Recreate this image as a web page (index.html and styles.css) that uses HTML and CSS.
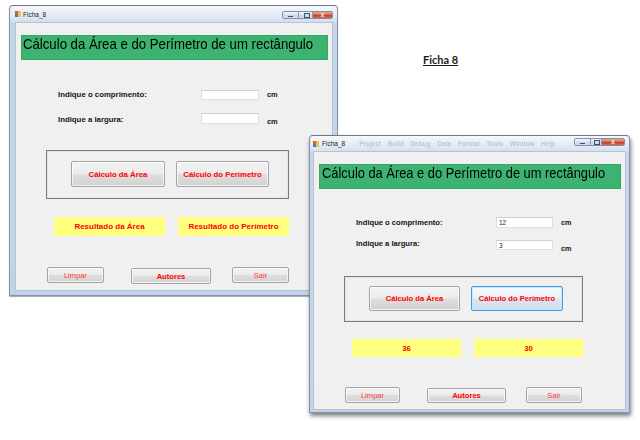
FILE: index.html
```html
<!DOCTYPE html>
<html lang="pt">
<head>
<meta charset="utf-8">
<title>Ficha 8</title>
<link rel="stylesheet" href="styles.css">
</head>
<body>
<div class="desk">
  <div class="win win1">
    <div class="titlebar">
      <svg class="appicon" viewBox="0 0 6 6" width="6" height="6"><rect x="0" y="0" width="3" height="3" fill="#e8582a"/><rect x="3" y="0" width="3" height="3" fill="#f5c242"/><rect x="0" y="3" width="3" height="3" fill="#3d7fd0"/><rect x="3" y="3" width="3" height="3" fill="#f5c242"/></svg>
      <span class="wtitle">Ficha_8</span>
      <div class="caps"><span class="cap min"></span><span class="cap max"></span><span class="cap close"></span></div>
    </div>
    <div class="client">
      <div class="header"><span>Cálculo da Área e do Perímetro de um rectângulo</span></div>
      <div class="row r1"><span class="lbl">Indique o comprimento:</span><span class="tb"></span><span class="unit">cm</span></div>
      <div class="row r2"><span class="lbl">Indique a largura:</span><span class="tb"></span><span class="unit">cm</span></div>
      <div class="group"><div class="btn calc a">Cálculo da Área</div><div class="btn calc b">Cálculo do Perímetro</div></div>
      <div class="results"><div class="res">Resultado da Área</div><div class="res">Resultado do Perímetro</div></div>
      <div class="actions"><div class="btn act limpar">Limpar</div><div class="btn act autores">Autores</div><div class="btn act sair">Sair</div></div>
    </div>
  </div>

  <div class="ficha">Ficha 8</div>

  <div class="win win2">
    <div class="titlebar">
      <svg class="appicon" viewBox="0 0 6 6" width="6" height="6"><rect x="0" y="0" width="3" height="3" fill="#e8582a"/><rect x="3" y="0" width="3" height="3" fill="#f5c242"/><rect x="0" y="3" width="3" height="3" fill="#3d7fd0"/><rect x="3" y="3" width="3" height="3" fill="#f5c242"/></svg>
      <span class="wtitle">Ficha_8</span>
      <div class="ghost"><span>Project</span><span>Build</span><span>Debug</span><span>Data</span><span>Format</span><span>Tools</span><span>Window</span><span>Help</span></div>
      <div class="caps"><span class="cap min"></span><span class="cap max"></span><span class="cap close"></span></div>
    </div>
    <div class="client">
      <div class="header"><span>Cálculo da Área e do Perímetro de um rectângulo</span></div>
      <div class="row r1"><span class="lbl">Indique o comprimento:</span><span class="tb">12</span><span class="unit">cm</span></div>
      <div class="row r2"><span class="lbl">Indique a largura:</span><span class="tb">3</span><span class="unit">cm</span></div>
      <div class="group"><div class="btn calc a">Cálculo da Área</div><div class="btn calc b focus">Cálculo do Perímetro</div></div>
      <div class="results"><div class="res">36</div><div class="res">30</div></div>
      <div class="actions"><div class="btn act limpar">Limpar</div><div class="btn act autores">Autores</div><div class="btn act sair">Sair</div></div>
    </div>
  </div>
</div>
</body>
</html>
```

FILE: styles.css
```css
html, body {
  margin: 0;
  padding: 0;
  background: #ffffff;
}
.desk {
  position: relative;
  width: 640px;
  height: 440px;
  overflow: hidden;
  font-family: "Liberation Sans", Arial, sans-serif;
}

/* ---------- window frame ---------- */
.win {
  position: absolute;
  box-sizing: border-box;
  border: 1px solid #8393a8;
  border-top-color: #6d7a8c;
  border-radius: 4px 4px 1px 1px;
  background: linear-gradient(to bottom, #f6f8fb 0, #e4ebf4 9px, #d3dfee 16px, #c6d6ea 17px, #c2d3e9 100%);
  display: flex;
  flex-direction: column;
}
.win1 {
  left: 9px;
  top: 5px;
  width: 329px;
  height: 291px;
  box-shadow: 0 1px 1px rgba(0,0,0,.35);
}
.win2 {
  left: 309px;
  top: 135px;
  width: 321px;
  height: 278px;
  box-shadow: 1px 3px 4px rgba(0,0,0,.5);
}

.titlebar {
  display: flex;
  align-items: center;
  flex: none;
}
.win1 .titlebar { height: 16px; padding: 0 4px 0 5px; }
.win2 .titlebar { height: 15px; padding: 0 4px 0 3px; }

.appicon { flex: none; display: block; }
.wtitle {
  margin-left: 2px;
  font-size: 6.5px;
  color: #222;
  white-space: nowrap;
}
.win2 .wtitle { margin-left: 3px; }

.ghost {
  display: flex;
  gap: 6.5px;
  margin-left: 14px;
  font-size: 6.5px;
  font-weight: bold;
  color: rgba(80, 92, 112, 0.28);
  filter: blur(0.5px);
  white-space: nowrap;
}

.caps {
  margin-left: auto;
  align-self: flex-start;
  display: flex;
  border: 1px solid #7f8fa6;
  border-radius: 2px;
  overflow: hidden;
  box-sizing: border-box;
  height: 8px;
}
.win1 .caps { margin-top: 5px; }
.win2 .caps { margin-top: 2px; }

.cap {
  position: relative;
  display: block;
  height: 100%;
  box-sizing: border-box;
  background: linear-gradient(to bottom, #f2f5fa, #d9e3ef 50%, #c8d5e6 51%, #d3dff0);
}
.cap + .cap { border-left: 1px solid #8c9bb0; }
.win1 .min { width: 15px; }
.win1 .max { width: 14px; }
.win1 .close { width: 20px; }
.win2 .min { width: 15px; }
.win2 .max { width: 11px; }
.win2 .close { width: 23px; }
.close {
  background: linear-gradient(to bottom, #e9a89b, #d5634f 50%, #c43b24 51%, #d76a4c);
}
.min::after {
  content: "";
  position: absolute;
  left: 50%;
  bottom: 1px;
  width: 5px;
  height: 1px;
  margin-left: -2.5px;
  background: #41506a;
}
.max::after {
  content: "";
  position: absolute;
  left: 50%;
  top: 1px;
  width: 4px;
  height: 3px;
  margin-left: -2px;
  border: 1px solid #41506a;
}
.close::after {
  content: "x";
  position: absolute;
  left: 0;
  right: 0;
  top: -1px;
  text-align: center;
  font-size: 7px;
  font-weight: bold;
  line-height: 7px;
  color: #fbe9e4;
}

/* ---------- client ---------- */
.client {
  flex: 1;
  background: #f0f0f0;
  box-shadow: inset 0 0 0 1px #b4c3d6;
}
.win1 .client { margin: 0 4px 4px 5px; }
.win2 .client { margin: 0 3px 2px 3px; }

.header {
  box-sizing: border-box;
  margin: 13px 0 0 6px;
  height: 25px;
  background: #3cb371;
  box-shadow: inset 0 0 0 1px #32a866;
  font-size: 14.5px;
  line-height: 18px;
  color: #000;
  white-space: nowrap;
  overflow: hidden;
}
.header span {
  display: inline-block;
  transform-origin: 0 0;
}
.win1 .header { width: 307px; padding-left: 2px; }
.win1 .header span { transform: scaleX(0.909); }
.win2 .header { width: 302px; padding-left: 3px; }
.win2 .header span { transform: scaleX(0.887); }

.row {
  display: flex;
  align-items: flex-start;
  margin-left: 43px;
}
.lbl {
  font-weight: bold;
  color: #141414;
  line-height: 10px;
  white-space: nowrap;
  flex: none;
}
.tb {
  box-sizing: border-box;
  background: #fff;
  border: 1px solid #dcdfe3;
  border-top-color: #cdd1d6;
  font-size: 6.5px;
  line-height: 9px;
  padding-left: 2px;
  color: #222;
  flex: none;
}
.unit {
  margin-left: 8px;
  font-weight: bold;
  color: #141414;
  line-height: 10px;
}

.win1 .lbl { width: 143px; font-size: 7.8px; }
.win1 .unit { font-size: 7.4px; }
.win1 .tb { width: 58px; }
.win1 .r1 { margin-top: 30px; height: 10px; }
.win1 .r1 .tb { height: 10px; }
.win1 .r2 { margin-top: 13px; height: 11px; }
.win1 .r2 .lbl { margin-top: 2px; }
.win1 .r2 .tb { height: 11px; }
.win1 .r2 .unit { margin-top: 4px; }

.win2 .lbl { width: 140px; font-size: 7.6px; }
.win2 .unit { font-size: 7.2px; }
.win2 .tb { width: 57px; }
.win2 .r1 { margin-top: 28px; height: 11px; }
.win2 .r1 .lbl { margin-top: 1px; }
.win2 .r1 .tb { height: 11px; }
.win2 .r1 .unit { margin-top: 1px; }
.win2 .r2 { margin-top: 12px; height: 10px; }
.win2 .r2 .lbl { margin-top: -1px; }
.win2 .r2 .tb { height: 10px; }
.win2 .r2 .unit { margin-top: 4px; }

/* ---------- group + buttons ---------- */
.group {
  box-sizing: border-box;
  display: flex;
  align-items: flex-start;
  gap: 11px;
  border: 1px solid #7c7c7c;
  box-shadow: inset 0 0 0 1px #e4e4e4;
  margin-top: 26px;
  margin-left: 31px;
}
.win1 .group { width: 243px; height: 49px; padding: 10px 0 0 24px; }
.win2 .group { width: 239px; height: 46px; padding: 9px 0 0 24px; }

.btn {
  box-sizing: border-box;
  display: flex;
  align-items: center;
  justify-content: center;
  border: 1px solid #a4a4a4;
  border-radius: 2px;
  background: linear-gradient(to bottom, #f3f3f3 0, #ebebeb 48%, #dedede 52%, #d2d2d2 100%);
  box-shadow: inset 0 0 0 1px rgba(255,255,255,.7);
  color: #ff0000;
  font-weight: bold;
  white-space: nowrap;
  flex: none;
}
.calc { font-size: 7.8px; }
.win1 .calc.a { width: 94px; height: 26px; }
.win1 .calc.b { width: 93px; height: 26px; }
.win2 .calc { font-size: 7.6px; }
.win2 .calc.a { width: 91px; height: 25px; }
.win2 .calc.b { width: 92px; height: 25px; }
.btn.focus {
  border-color: #3e9fe0;
  background: linear-gradient(to bottom, #f6fafd 0, #e8f1f8 48%, #d9e6f1 52%, #cfdeeb 100%);
  box-shadow: inset 0 0 0 1px #c9e6fa;
}

/* ---------- results ---------- */
.results {
  display: flex;
  gap: 13px;
  margin-left: 39px;
}
.res {
  display: flex;
  align-items: center;
  justify-content: center;
  background: #ffff80;
  color: #ff0000;
  font-weight: bold;
  font-size: 8px;
  white-space: nowrap;
}
.win1 .results { margin-top: 18px; }
.win1 .res { width: 111px; height: 19px; }
.win2 .results { margin-top: 17px; }
.win2 .res { width: 109px; height: 18px; font-size: 7.8px; }

/* ---------- bottom actions ---------- */
.actions {
  display: flex;
  align-items: flex-start;
  margin-left: 32px;
}
.act { font-size: 7.6px; height: 16px; }
.limpar, .sair { font-weight: normal; color: #ff3a3a; }
.win1 .actions { margin-top: 31px; }
.win1 .limpar { width: 57px; }
.win1 .autores { width: 80px; margin-left: 27px; margin-top: 1px; }
.win1 .sair { width: 57px; margin-left: 21px; }
.win2 .actions { margin-top: 30px; }
.win2 .limpar { width: 55px; }
.win2 .autores { width: 79px; height: 15px; margin-left: 27px; margin-top: 1px; }
.win2 .sair { width: 56px; margin-left: 20px; }

/* ---------- document heading ---------- */
.ficha {
  position: absolute;
  left: 423px;
  top: 54px;
  font-family: Lato, "Liberation Sans", sans-serif;
  font-weight: bold;
  font-size: 11px;
  line-height: 11px;
  color: #1c1c1c;
  text-decoration: underline;
  text-underline-offset: 1px;
}
```
